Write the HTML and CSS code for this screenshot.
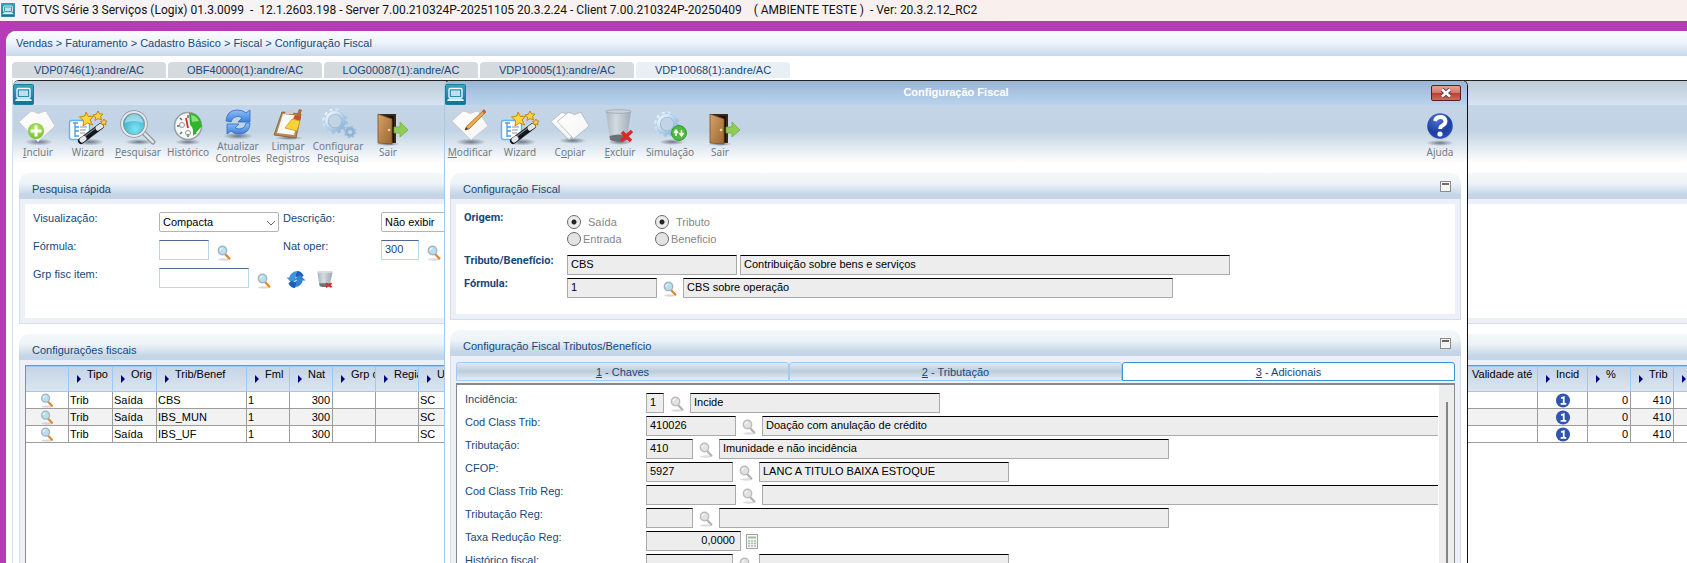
FILE: index.html
```html
<!DOCTYPE html>
<html lang="pt-BR">
<head>
<meta charset="utf-8">
<title>TOTVS Série 3 Serviços (Logix)</title>
<link rel="stylesheet" href="styles.css">
</head>
<body>
<svg class="sprite" aria-hidden="true">
  <defs>
    <linearGradient id="gTeal" x1="0" y1="0" x2="0" y2="1"><stop offset="0" stop-color="#3aa5bd"/><stop offset="1" stop-color="#0f7192"/></linearGradient>
    <linearGradient id="gPage" x1="0" y1="0" x2="1" y2="1"><stop offset="0" stop-color="#fff"/><stop offset="1" stop-color="#f4f4f6"/></linearGradient>
    <radialGradient id="gGreen" cx=".5" cy=".35" r=".7"><stop offset="0" stop-color="#b6ec62"/><stop offset="1" stop-color="#6fbe2c"/></radialGradient>
    <radialGradient id="gLens" cx=".55" cy=".7" r=".7"><stop offset="0" stop-color="#7fe6f5"/><stop offset="1" stop-color="#2b9dbd"/></radialGradient>
    <radialGradient id="gShadow"><stop offset="0" stop-color="#4a5563" stop-opacity=".75"/><stop offset="1" stop-color="#4a5563" stop-opacity="0"/></radialGradient>
    <linearGradient id="gBlue" x1="0" y1="0" x2="0" y2="1"><stop offset="0" stop-color="#8fc0f5"/><stop offset="1" stop-color="#3c7fdc"/></linearGradient>
    <linearGradient id="gGear" x1="0" y1="0" x2="1" y2="1"><stop offset="0" stop-color="#f0fafe"/><stop offset="1" stop-color="#86b2da"/></linearGradient>
    <linearGradient id="gDoor" x1="0" y1="0" x2="1" y2="1"><stop offset="0" stop-color="#d6a468"/><stop offset="1" stop-color="#9a6430"/></linearGradient>
    <linearGradient id="gGlass" x1="0" y1="0" x2="1" y2="0"><stop offset="0" stop-color="#a9b3ba"/><stop offset=".4" stop-color="#d5dce1"/><stop offset="1" stop-color="#9aa5ad"/></linearGradient>
    <radialGradient id="gHelp" cx=".4" cy=".25" r=".85"><stop offset="0" stop-color="#4d74d2"/><stop offset=".6" stop-color="#1d3f9f"/><stop offset="1" stop-color="#3158c4"/></radialGradient>
  </defs>
  <symbol id="i-app" viewBox="0 0 21 21">
    <rect x=".5" y=".5" width="20" height="20" rx="1" fill="url(#gTeal)" stroke="#1a7f9e"/>
    <rect x="4" y="4.500" width="13" height="9.500" rx="1" fill="#2a8fae" stroke="#fff" stroke-width="1.300"/>
    <rect x="6" y="6.500" width="9" height="5.500" fill="#bfe0ea"/>
    <path d="M3 15h15l1 2H2z" fill="#d9eef5"/>
  </symbol>
  <symbol id="i-add" viewBox="0 0 40 38">
    <ellipse cx="21" cy="34" rx="14" ry="3.500" fill="url(#gShadow)"/>
    <path d="M1 14 13 3l4 1q3 3 7 0l4-1 9 15-17 16z" fill="url(#gPage)" stroke="#c3c6cc" stroke-width=".8"/>
    <circle cx="18" cy="23" r="8" fill="url(#gGreen)"/>
    <path d="M18 17.500v11M12.500 23h11" stroke="#fff" stroke-width="3"/>
  </symbol>
  <symbol id="i-edit" viewBox="0 0 40 38">
    <ellipse cx="21" cy="34" rx="15" ry="3.500" fill="url(#gShadow)"/>
    <path d="M2 13 13 3l4 1q3 3 7 0l4-1 10 15-17 14z" fill="url(#gPage)" stroke="#c3c6cc" stroke-width=".8"/>
    <path d="m15 22 2-4L34 2l2 2-17 17z" fill="#f0ab4c" stroke="#a96420" stroke-width=".8"/>
    <path d="m34 1 2 3-2 2-2-3z" fill="#c9604c"/><path d="m15 22 1-3 2 2z" fill="#333"/>
  </symbol>
  <symbol id="i-copy" viewBox="0 0 44 38">
    <ellipse cx="25" cy="34" rx="15" ry="3.500" fill="url(#gShadow)"/>
    <path d="M1 13 13 3l4 1 7 0 8 14-11 15z" fill="url(#gPage)" stroke="#a9aeb6" stroke-width=".8"/>
    <path d="M8 13 20 3l4 1q3 3 6 0l4-1 9 15-17 14z" fill="url(#gPage)" stroke="#a9aeb6" stroke-width=".8"/>
  </symbol>
  <symbol id="i-wizard" viewBox="0 0 40 38">
    <ellipse cx="22" cy="34" rx="14" ry="3.500" fill="url(#gShadow)"/>
    <rect x="1.500" y="12.500" width="20" height="19" rx="2" fill="#fff" stroke="#65b3f0" stroke-width="1.500"/>
    <path d="M5 15h5M7 15v14M7 19h4M7 23h4M7 28h4" stroke="#4b9ce0" stroke-width="1.300" fill="none"/>
    <path d="M13 33 33 18" stroke="#15171a" stroke-width="6" stroke-linecap="round"/>
    <path d="m14 32 2-1.500M30 20l3-2" stroke="#e3e6e8" stroke-width="5" stroke-linecap="round"/>
    <path d="m17 28 10-7.500" stroke="#7d8388" stroke-width="1.200"/>
    <path d="M12 19h7M12 22h6M12 25h5" stroke="#8d949c" stroke-width="1.200"/>
    <g fill="#ffd43d" stroke="#c48a0c" stroke-width="1">
      <path d="m18 4 2.500 4.500 5-.5-3.300 4 2.300 5-5-2-4.500 3 .5-5.500-4-3.500 5.200-1z"/>
      <path d="m30 3 1.500 3 3.500 0-2.500 2.500 1 3.500-3.500-1.500-3 2 .5-3.500-2.500-2 3.300-.7z"/>
      <path d="m36 11 1 2h2l-1.500 2 .5 2-2-1-2 1v-2l-1.500-1.500 2.200-.5z"/>
    </g>
  </symbol>
  <symbol id="i-search" viewBox="0 0 40 38">
    <ellipse cx="21" cy="34" rx="14" ry="3" fill="url(#gShadow)"/>
    <path d="m25 24 10 10" stroke="#8a949c" stroke-width="5" stroke-linecap="round"/>
    <path d="m25 24 10 10" stroke="#dfe4e7" stroke-width="2.500" stroke-linecap="round"/>
    <circle cx="16" cy="16" r="12" fill="url(#gLens)" stroke="#8c979f" stroke-width="3.500"/>
    <circle cx="16" cy="16" r="12" fill="none" stroke="#e3e8eb" stroke-width="2"/>
    <path d="M7 15a9 9 0 0 1 18 0q-9-4-18 0" fill="#fff" opacity=".45"/>
  </symbol>
  <symbol id="i-history" viewBox="0 0 40 38">
    <ellipse cx="20" cy="34" rx="13" ry="3" fill="url(#gShadow)"/>
    <circle cx="20" cy="18" r="13.500" fill="#f6f7f7" stroke="#9aa0a5" stroke-width="1.600"/>
    <path d="M20 7v3M9 18h3M20 29v-3M12 10l2 2M12 26l2-2M28 26l-2-2" stroke="#6a7075" stroke-width="1.600"/>
    <circle cx="14" cy="17" r="2.500" fill="none" stroke="#999"/><circle cx="20" cy="25" r="2.500" fill="none" stroke="#999"/>
    <path d="M18 10l2 10" stroke="#d0312a" stroke-width="1.800"/>
    <path d="M21 5q8 0 11 6l2 7-9 10v-6q0-3-3-5z" fill="#2fb52a"/><path d="M23 7q6 1 8 6l-7 1z" fill="#8be07a"/>
  </symbol>
  <symbol id="i-refresh" viewBox="0 0 40 32">
    <ellipse cx="20" cy="28" rx="15" ry="3.500" fill="url(#gShadow)"/>
    <g fill="url(#gBlue)" stroke="#2f6ac2" stroke-width=".8">
      <path d="M8 13Q9 2 19 2q6 0 9 3l4-3v12H20l4-4q-3-3-7-1-3 1-4 5z"/>
      <path d="M32 15q0 10-10 11-6 0-9-3l-4 3V16h12l-4 4q4 2 8 0 2-1 3-5z"/>
    </g>
  </symbol>
  <symbol id="i-clear" viewBox="0 0 40 32">
    <ellipse cx="21" cy="30" rx="14" ry="2" fill="url(#gShadow)"/>
    <path d="m14 4 19 2-5 24-22-3z" fill="#b98a54" stroke="#7f552b" stroke-width=".8"/>
    <path d="m15 6 16 2-5 19-17-2z" fill="#fafafa"/><path d="M18 2h8l-1 4h-8z" fill="#c9ccd0"/>
    <path d="m31 1 3 1-3 8-3-1z" fill="#b8683a"/><path d="m27 7 6 2-1 4-7-2z" fill="#cf4a36"/>
    <path d="m24 11 8 2-3 10-12-3z" fill="#f8d434" stroke="#c99c10" stroke-width=".8"/>
  </symbol>
  <symbol id="i-gears" viewBox="0 0 40 32">
    <circle cx="17" cy="13" r="11" fill="none" stroke="url(#gGear)" stroke-width="3.500" stroke-dasharray="3.200 2.560"/>
    <circle cx="17" cy="13" r="8.500" fill="none" stroke="#8fb3d2" stroke-width="4"/>
    <circle cx="17" cy="13" r="8.700" fill="none" stroke="url(#gGear)" stroke-width="3.200"/>
    <circle cx="32" cy="24" r="3.500" fill="none" stroke="#8fb3d2" stroke-width="2.800"/>
    <circle cx="32" cy="24" r="5.300" fill="none" stroke="#9cbedd" stroke-width="2" stroke-dasharray="2.200 1.960"/>
  </symbol>
  <symbol id="i-sim" viewBox="0 0 40 38">
    <ellipse cx="22" cy="34" rx="13" ry="3" fill="url(#gShadow)"/>
    <circle cx="17" cy="16" r="11" fill="none" stroke="url(#gGear)" stroke-width="3.500" stroke-dasharray="3.200 2.560"/>
    <circle cx="17" cy="16" r="8.500" fill="none" stroke="#8fb3d2" stroke-width="4"/>
    <circle cx="17" cy="16" r="8.700" fill="none" stroke="url(#gGear)" stroke-width="3.200"/>
    <circle cx="29" cy="25" r="7.500" fill="#4fbb3c" stroke="#2a8a22" stroke-width=".8"/>
    <path d="M26 28v-5m-2 2 2-3 2 3M31.500 22v5m-2-2 2 3 2-3" fill="none" stroke="#fff" stroke-width="1.500"/>
  </symbol>
  <symbol id="i-exit" viewBox="0 0 40 38">
    <ellipse cx="20" cy="36" rx="12" ry="2" fill="url(#gShadow)"/>
    <path d="M10 6h18v29H10z" fill="#3b2817"/><path d="M14 8h12v26H14z" fill="#16130f"/>
    <path d="m10 6 14 5v25l-14-1z" fill="url(#gDoor)" stroke="#7c4f23" stroke-width=".8"/>
    <circle cx="21" cy="22" r="1.300" fill="#f3dc9a"/>
    <path d="M26 19h6v-5l8 8-8 7v-4h-6z" fill="#8fcb55" stroke="#6fae38" stroke-width=".7"/>
  </symbol>
  <symbol id="i-trash" viewBox="0 0 40 38">
    <ellipse cx="20" cy="34" rx="12" ry="3" fill="url(#gShadow)"/>
    <path d="m6 3 4 29q9 4 17 0l4-29z" fill="url(#gGlass)" opacity=".85"/>
    <path d="m9.500 28 .6 4q9 4 17 0l.6-4q-9-3-18.200 0" fill="#6a7278"/>
    <ellipse cx="18.500" cy="3.500" rx="12.800" ry="1.800" fill="#ccd3d8" stroke="#9aa4ab" stroke-width=".8"/>
    <path d="m22 24 9 9m1-10L21 33" stroke="#d62a24" stroke-width="3.500"/>
  </symbol>
  <symbol id="i-help" viewBox="0 0 40 38">
    <ellipse cx="20" cy="35" rx="14" ry="3" fill="url(#gShadow)"/>
    <circle cx="20" cy="18" r="13.500" fill="url(#gHelp)" stroke="#c7d3ea" stroke-width="1.500"/>
    <path d="M15 13q1-4 5.500-4t5 4q0 3-3 4.500-2.300 1-2.300 3.500" fill="none" stroke="#fff" stroke-width="3.800"/>
    <circle cx="20" cy="26" r="2.600" fill="#fff"/>
  </symbol>
  <symbol id="i-lens" viewBox="0 0 14 16">
    <ellipse cx="7" cy="14.500" rx="6" ry="1.200" fill="#b9c0c6" opacity=".6"/>
    <path d="m8.500 9.500 3.800 4" stroke="#e08a2c" stroke-width="2.400" stroke-linecap="round"/>
    <circle cx="5.500" cy="5.500" r="4.200" fill="#b5e0f2" stroke="#a7b3bd" stroke-width="1.400"/>
    <path d="M3 5.500q0-2.500 2.500-2.500" stroke="#fff" fill="none"/>
  </symbol>
  <symbol id="i-lens-off" viewBox="0 0 14 16">
    <ellipse cx="7" cy="14.500" rx="6" ry="1.200" fill="#c4c4c4" opacity=".6"/>
    <path d="m8.500 9.500 3.800 4" stroke="#b4b4b4" stroke-width="2.400" stroke-linecap="round"/>
    <circle cx="5.500" cy="5.500" r="4.200" fill="#e2e2e2" stroke="#bcbcbc" stroke-width="1.400"/>
    <path d="M3 5.500q0-2.500 2.500-2.500" stroke="#fff" fill="none"/>
  </symbol>
  <symbol id="i-sync" viewBox="0 0 20 20">
    <path d="M0 8h3q1-6 8-7l-1 3 1 3q-2 0-2 2h3l-6 5z" fill="#3f94e0"/>
    <path d="M11 1q5 0 7 5l-4 3q-1-2-4-2l0-3z" fill="#1c5fb4"/>
    <path d="M20 11h-3q-1 6-8 7l1-3-1-3q2 0 2-2H8l6-5z" fill="#2f82d6"/>
    <path d="M9 19q-5 0-7-5l4-3q1 2 4 2v3z" fill="#1c5fb4"/>
  </symbol>
  <symbol id="i-bin" viewBox="0 0 18 20">
    <path d="m1 2 2 14q6 3 11 0l3-14z" fill="url(#gGlass)"/>
    <path d="m3 14 .5 3q5 2 11 0l.5-3z" fill="#6a7278"/>
    <path d="M1 1h16v2H1z" fill="#d9dee2"/><path d="m10 14 6 4m0-4-6 4" stroke="#d2322c" stroke-width="2"/>
  </symbol>
  <symbol id="i-calc" viewBox="0 0 12 15">
    <rect x=".5" y=".5" width="11" height="14" fill="#f6f8f5" stroke="#9aa69a"/>
    <path d="M2 2.500h8v2H2z" fill="#a3c0a3"/>
    <path d="M2 7h2M5 7h2M8 7h2M2 9.500h2M5 9.500h2M8 9.500h2M2 12h2M5 12h2M8 12h2" stroke="#a6b6a6" stroke-width="1.300"/>
  </symbol>
  <symbol id="i-min" viewBox="0 0 11 11">
    <rect x=".5" y=".5" width="10" height="10" fill="#f4f4f4" stroke="#8c8c8c"/><path d="M2 3h7" stroke="#444" stroke-width="1.600"/>
  </symbol>
  <symbol id="i-one" viewBox="0 0 16 16">
    <circle cx="8" cy="8" r="7.500" fill="#2f55b0"/><path d="M5.500 11.500h6M8.800 11.500V4.500l-2.800 1" stroke="#fff" stroke-width="1.900" fill="none"/>
  </symbol>
  <symbol id="i-close" viewBox="0 0 12 10"><path d="m2 1.500 8 7m0-7-8 7" stroke="#5a3b3b" stroke-width="4.400"/><path d="m2 1.500 8 7m0-7-8 7" stroke="#fff" stroke-width="2.600"/></symbol>
  <symbol id="i-chev" viewBox="0 0 10 6"><path d="m1 1 4 4 4-4" fill="none" stroke="#666"/></symbol>
</svg>

<div class="app">
  <header class="titlebar">
    <svg class="titlebar-icon"><use href="#i-app"/></svg>
    <span class="caption">TOTVS Série 3 Serviços (Logix) 01.3.0099&nbsp; -&nbsp; 12.1.2603.198 - Server 7.00.210324P-20251105 20.3.2.24 - Client 7.00.210324P-20250409 &nbsp;&nbsp; ( AMBIENTE TESTE )&nbsp; - Ver: 20.3.2.12_RC2</span>
  </header>

  <div class="desktop">
    <nav class="breadcrumb">Vendas &gt; Faturamento &gt; Cadastro Básico &gt; Fiscal &gt; Configuração Fiscal</nav>
    <div class="session-tabs">
      <button class="session">VDP0746(1):andre/AC</button>
      <button class="session">OBF40000(1):andre/AC</button>
      <button class="session">LOG00087(1):andre/AC</button>
      <button class="session">VDP10005(1):andre/AC</button>
      <button class="session current">VDP10068(1):andre/AC</button>
    </div>

    <main class="canvas">
      <section class="window">
        <div class="window-title inactive"><svg class="window-icon"><use href="#i-app"/></svg></div>
        <div class="toolbar">
          <button class="tool"><svg><use href="#i-add"/></svg><span><u>I</u>ncluir</span></button>
          <button class="tool"><svg><use href="#i-wizard"/></svg><span>Wizard</span></button>
          <button class="tool"><svg><use href="#i-search"/></svg><span><u>P</u>esquisar</span></button>
          <button class="tool"><svg><use href="#i-history"/></svg><span>Histórico</span></button>
          <button class="tool two-line"><svg><use href="#i-refresh"/></svg><span>Atualizar<br>Controles</span></button>
          <button class="tool two-line"><svg><use href="#i-clear"/></svg><span>Limpar<br>Registros</span></button>
          <button class="tool two-line"><svg><use href="#i-gears"/></svg><span>Configurar<br>Pesquisa</span></button>
          <button class="tool"><svg><use href="#i-exit"/></svg><span>Sair</span></button>
        </div>

        <section class="panel">
          <h2 class="panel-head">Pesquisa rápida</h2>
          <div class="panel-body">
            <form class="form search-form">
              <div class="line">
                <label class="lead" for="vis">Visualização:</label>
                <span class="slot"><span class="select"><select id="vis"><option>Compacta</option></select><svg><use href="#i-chev"/></svg></span></span>
                <label class="mid" for="desc">Descrição:</label>
                <span class="select"><select id="desc"><option>Não exibir</option></select><svg><use href="#i-chev"/></svg></span>
              </div>
              <div class="line">
                <label class="lead" for="fml">Fórmula:</label>
                <span class="slot"><input class="field w50" id="fml"><button type="button" class="lookup wide" aria-label="Buscar fórmula"><svg><use href="#i-lens"/></svg></button></span>
                <label class="mid" for="nat">Nat oper:</label>
                <input class="field w38" id="nat" value="300"><button type="button" class="lookup wide" aria-label="Buscar natureza"><svg><use href="#i-lens"/></svg></button>
              </div>
              <div class="line">
                <label class="lead" for="grp">Grp fisc item:</label>
                <input class="field w90" id="grp"><button type="button" class="lookup wide" aria-label="Buscar grupo"><svg><use href="#i-lens"/></svg></button>
                <button type="button" class="mini" aria-label="Atualizar"><svg><use href="#i-sync"/></svg></button>
                <button type="button" class="mini" aria-label="Limpar"><svg><use href="#i-bin"/></svg></button>
              </div>
            </form>
          </div>
        </section>

        <section class="panel grow">
          <h2 class="panel-head">Configurações fiscais</h2>
          <div class="panel-body">
            <div class="grid-box">
              <table class="grid">
                <colgroup>
                  <col class="c43"><col class="c44"><col class="c44"><col class="c90"><col class="c43"><col class="c43"><col class="c43"><col class="c43"><col class="c43"><col><col class="c84"><col class="c50"><col class="c43"><col class="c43"><col class="c43">
                </colgroup>
                <thead><tr><th class="plain"></th><th>Tipo</th><th>Orig</th><th>Trib/Benef</th><th>Fml</th><th>Nat</th><th>Grp cli</th><th>Região</th><th>UF</th><th></th><th>Validade até</th><th>Incid</th><th>%</th><th>Trib</th><th></th></tr></thead>
                <tbody>
                  <tr><td class="icon"><svg class="lens"><use href="#i-lens"/></svg></td><td>Trib</td><td>Saída</td><td>CBS</td><td>1</td><td class="num">300</td><td></td><td></td><td>SC</td><td></td><td></td><td class="icon"><svg class="one"><use href="#i-one"/></svg></td><td class="num">0</td><td class="num">410</td><td></td></tr>
                  <tr><td class="icon"><svg class="lens"><use href="#i-lens"/></svg></td><td>Trib</td><td>Saída</td><td>IBS_MUN</td><td>1</td><td class="num">300</td><td></td><td></td><td>SC</td><td></td><td></td><td class="icon"><svg class="one"><use href="#i-one"/></svg></td><td class="num">0</td><td class="num">410</td><td></td></tr>
                  <tr><td class="icon"><svg class="lens"><use href="#i-lens"/></svg></td><td>Trib</td><td>Saída</td><td>IBS_UF</td><td>1</td><td class="num">300</td><td></td><td></td><td>SC</td><td></td><td></td><td class="icon"><svg class="one"><use href="#i-one"/></svg></td><td class="num">0</td><td class="num">410</td><td></td></tr>
                </tbody>
              </table>
            </div>
          </div>
        </section>
      </section>

      <section class="window dialog" role="dialog" aria-labelledby="dlg-title">
        <div class="window-title">
          <svg class="window-icon"><use href="#i-app"/></svg>
          <h1 id="dlg-title">Configuração Fiscal</h1>
          <button class="close" aria-label="Fechar"><svg><use href="#i-close"/></svg></button>
        </div>
        <div class="toolbar">
          <button class="tool"><svg><use href="#i-edit"/></svg><span><u>M</u>odificar</span></button>
          <button class="tool"><svg><use href="#i-wizard"/></svg><span>Wizard</span></button>
          <button class="tool"><svg><use href="#i-copy"/></svg><span>C<u>o</u>piar</span></button>
          <button class="tool"><svg><use href="#i-trash"/></svg><span><u>E</u>xcluir</span></button>
          <button class="tool"><svg><use href="#i-sim"/></svg><span>Simulação</span></button>
          <button class="tool"><svg><use href="#i-exit"/></svg><span>Sair</span></button>
          <button class="tool help"><svg><use href="#i-help"/></svg><span>Ajuda</span></button>
        </div>

        <section class="panel">
          <div class="panel-head"><h2>Configuração Fiscal</h2><button class="collapse" aria-label="Recolher"><svg><use href="#i-min"/></svg></button></div>
          <div class="panel-body">
            <form class="form key-form">
              <div class="line origin">
                <span class="lead">Origem:</span>
                <div class="radios">
                  <label class="spaced"><input type="radio" name="origem" checked disabled>Saída</label>
                  <label class="spaced"><input type="radio" name="tipo" checked disabled>Tributo</label>
                  <label><input type="radio" name="origem" disabled>Entrada</label>
                  <label><input type="radio" name="tipo" disabled>Beneficio</label>
                </div>
              </div>
              <div class="line">
                <label class="lead" for="trib">Tributo/Benefício:</label>
                <input class="field ro w170" id="trib" value="CBS" readonly><input class="field ro w490 near" aria-label="Descrição do tributo" value="Contribuição sobre bens e serviços" readonly>
              </div>
              <div class="line">
                <label class="lead" for="form">Fórmula:</label>
                <input class="field ro w90" id="form" value="1" readonly><button type="button" class="lookup" aria-label="Buscar"><svg><use href="#i-lens"/></svg></button><input class="field ro w490" aria-label="Descrição da fórmula" value="CBS sobre operação" readonly>
              </div>
            </form>
          </div>
        </section>

        <section class="panel grow">
          <div class="panel-head"><h2>Configuração Fiscal Tributos/Benefício</h2><button class="collapse" aria-label="Recolher"><svg><use href="#i-min"/></svg></button></div>
          <div class="panel-body tabbed">
            <div class="tabs" role="tablist">
              <button role="tab"><span><u>1</u> - Chaves</span></button>
              <button role="tab"><span><u>2</u> - Tributação</span></button>
              <button role="tab" class="selected" aria-selected="true"><span><u>3</u> - Adicionais</span></button>
            </div>
            <div class="tab-page">
              <form class="form detail-form">
                <div class="line"><label class="lead" for="f1">Incidência:</label><input class="field ro w18" id="f1" value="1" readonly><button type="button" class="lookup" disabled aria-label="Buscar"><svg><use href="#i-lens-off"/></svg></button><input class="field ro w250" aria-label="Incidência" value="Incide" readonly></div>
                <div class="line"><label class="lead" for="f2">Cod Class Trib:</label><input class="field ro w90" id="f2" value="410026" readonly><button type="button" class="lookup" disabled aria-label="Buscar"><svg><use href="#i-lens-off"/></svg></button><input class="field ro rest" aria-label="Classificação" value="Doação com anulação de crédito" readonly></div>
                <div class="line"><label class="lead" for="f3">Tributação:</label><input class="field ro w47" id="f3" value="410" readonly><button type="button" class="lookup" disabled aria-label="Buscar"><svg><use href="#i-lens-off"/></svg></button><input class="field ro w450" aria-label="Tributação" value="Imunidade e não incidência" readonly></div>
                <div class="line"><label class="lead" for="f4">CFOP:</label><input class="field ro w87" id="f4" value="5927" readonly><button type="button" class="lookup" disabled aria-label="Buscar"><svg><use href="#i-lens-off"/></svg></button><input class="field ro w250" aria-label="CFOP" value="LANC A TITULO BAIXA ESTOQUE" readonly></div>
                <div class="line"><label class="lead" for="f5">Cod Class Trib Reg:</label><input class="field ro w90" id="f5" readonly><button type="button" class="lookup" disabled aria-label="Buscar"><svg><use href="#i-lens-off"/></svg></button><input class="field ro rest" aria-label="Classificação regular" readonly></div>
                <div class="line"><label class="lead" for="f6">Tributação Reg:</label><input class="field ro w47" id="f6" readonly><button type="button" class="lookup" disabled aria-label="Buscar"><svg><use href="#i-lens-off"/></svg></button><input class="field ro w450" aria-label="Tributação regular" readonly></div>
                <div class="line"><label class="lead" for="f7">Taxa Redução Reg:</label><input class="field ro w95 right" id="f7" value="0,0000" readonly><button type="button" class="calc" disabled aria-label="Calculadora"><svg><use href="#i-calc"/></svg></button></div>
                <div class="line"><label class="lead" for="f8">Histórico fiscal:</label><input class="field ro w87" id="f8" readonly><button type="button" class="lookup" disabled aria-label="Buscar"><svg><use href="#i-lens-off"/></svg></button><input class="field ro w250" aria-label="Histórico fiscal" readonly></div>
              </form>
              <div class="scroll"><div class="thumb"></div></div>
            </div>
          </div>
        </section>
      </section>
    </main>
  </div>
</div>
</body>
</html>
```
FILE: styles.css
```css
* { box-sizing: border-box; }
html, body { margin: 0; height: 100%; }
body {
  font: 11px/12px "Liberation Sans", Arial, sans-serif;
  color: #17487a;
  background: #b73bb7;
  overflow: hidden;
}
button { font: inherit; color: inherit; padding: 0; margin: 0; border: 0; background: none; }
input, select { font: inherit; margin: 0; }
h1, h2 { margin: 0; font: inherit; }
svg { display: block; flex: none; }
.sprite { position: absolute; width: 0; height: 0; }

.app { height: 100vh; display: flex; flex-direction: column; overflow: hidden; }
.titlebar {
  flex: none; height: 21px; display: flex; align-items: center; gap: 7px; padding: 0 1px 2px;
  background: linear-gradient(90deg, #f6f3f6, #f9efed 60%);
  color: #111; font: 12px/16px Roboto, "Noto Sans", sans-serif; white-space: nowrap;
}
.titlebar-icon { width: 14px; height: 14px; }

.desktop {
  flex: 1; min-height: 0; margin: 10px 0 0 6px; display: flex; flex-direction: column;
  background: #fff; border-top-left-radius: 10px; overflow: hidden;
}
.breadcrumb {
  flex: none; height: 25px; padding-left: 10px; line-height: 25px; font-size: 11px;
  background: linear-gradient(#fafcff, #eef4fb 45%, #c6d8ec);
}
.session-tabs { flex: none; display: flex; gap: 2px; padding: 6px 0 0 6px; height: 24px; }
.session {
  width: 154px; height: 16px; border-radius: 4px 4px 0 0; background: #d5dadf; line-height: 16px;
}
.session.current { background: #e8eff5; }

.canvas { flex: 1; min-height: 0; position: relative; border-left: 1px solid #d5e3ee; margin-left: 6px; display: flex; }
.window {
  flex: 1; min-width: 0; display: flex; flex-direction: column;
  background: #fff; border-top: 1px solid #222; border-top-left-radius: 6px; overflow: hidden;
}
.dialog {
  position: absolute; top: 0; bottom: 0; left: 431px; right: 219px;
  border-left: 1px solid #a9c9e6; border-right: 1px solid #111; border-top-right-radius: 6px;
}
.window-title {
  flex: none; height: 24px; display: flex; align-items: center; justify-content: space-between;
  background: linear-gradient(#9ab5d3, #a9c4e1 45%, #b9d3ed);
  color: #fff; font-weight: bold;
}
.window-title.inactive { background: linear-gradient(#bdcbda, #d7e5f2); }
.window-title h1 { font-size: 11px; padding: 0 0 2px 15px; }
.window-icon { width: 21px; height: 21px; align-self: flex-end; }
.close {
  width: 30px; height: 16px; margin-right: 6px; border: 1px solid #5a1c20; border-radius: 2px;
  background: linear-gradient(#e7a294, #d4776a 48%, #b93f33 52%, #d4685a);
  display: flex; align-items: center; justify-content: center;
}
.close svg { width: 12px; height: 10px; }

.toolbar {
  flex: none; height: 68px; padding-top: 3px; display: flex;
  background: linear-gradient(#c3d5e6, #c1d3e4 38%, #fff 85%);
}
.tool {
  width: 50px; flex: none; display: flex; flex-direction: column; align-items: center;
  justify-content: flex-start; white-space: nowrap;
  color: #737b83; font: 10px/12px "Noto Sans", sans-serif;
}
.tool svg { width: 40px; height: 38px; }
.tool.two-line svg { height: 32px; }
.tool.help { margin: 0 2px 0 auto; }

.panel { flex: none; margin: 0 6px 10px; display: flex; flex-direction: column; }
.window:not(.dialog) > .panel { margin-right: -16px; }
.dialog > .panel { margin-left: 5px; }
.panel.grow, .window:not(.dialog) > .panel.grow { flex: 1; min-height: 0; margin-bottom: 0; }
.panel-head {
  flex: none; height: 26px; padding: 5px 10px 0 13px; display: flex; align-items: center;
  justify-content: space-between; border-radius: 10px 10px 0 0; font-size: 11px;
  background: linear-gradient(#f4f8fa, #edf3f7 40%, #c3d5e6 85%);
}
.collapse svg { width: 11px; height: 11px; margin-bottom: 5px; }
.panel-body {
  flex: 1; min-height: 0; display: flex; flex-direction: column; padding: 5px;
  background: #edf1f7; border: solid #d3e0eb; border-width: 0 1px 1px;
}
.grow > .panel-body { padding-bottom: 0; border-bottom: 0; }

.form { flex: 1; min-width: 0; background: #fff; padding: 8px 0 0 8px; display: flex; flex-direction: column; }
.line { display: flex; align-items: flex-start; flex: none; }
.lead, .mid { flex: none; white-space: nowrap; }
.search-form { gap: 8px; padding-bottom: 30px; }
.search-form .line { height: 20px; }
.search-form .lead { width: 126px; }
.search-form .mid { width: 98px; }
.slot { width: 124px; flex: none; display: flex; }
.key-form { gap: 3px; padding-bottom: 16px; }
.key-form .lead { width: 103px; font: bold 11px/12px Roboto, "Noto Sans", sans-serif; }
.detail-form { gap: 3px; }
.detail-form .lead { width: 181px; }

.field {
  flex: none; height: 20px; padding: 0 3px 2px; color: #17487a; background: #fff; outline: 0;
  border: 1px solid #b7d7ef; border-top-color: #54698f; border-radius: 0;
}
.field.ro { background: #ededed; color: #000; border-color: #000 #aaa #aaa; }
.field.near { margin-left: 3px; }
.field.right { text-align: right; padding-right: 5px; }
.field.rest { flex: 1; min-width: 0; border-right: 0; margin-right: 1px; }
.w18 { width: 18px; } .w38 { width: 38px; } .w47 { width: 47px; } .w50 { width: 50px; }
.w87 { width: 87px; } .w90 { width: 90px; } .w95 { width: 95px; } .w170 { width: 170px; }
.w250 { width: 250px; } .w450 { width: 450px; } .w490 { width: 490px; }

.select { position: relative; flex: none; width: 120px; }
.select select {
  appearance: none; display: block; width: 100%; height: 20px; padding: 0 3px; color: #000;
  background: #fff; border: 1px solid #b4b4b4; border-radius: 2px;
}
.select svg { position: absolute; right: 3px; top: 8px; width: 10px; height: 6px; }
.lookup { width: 26px; flex: none; padding: 3px 6px 0; }
.lookup.wide { width: 30px; padding: 5px 8px 0; }
.lookup svg { width: 14px; height: 16px; }
.mini { width: 20px; margin: 2px 2px 0 7px; flex: none; }
.mini svg { width: 20px; height: 19px; }
.calc { padding: 3px 5px 0; }
.calc svg { width: 12px; height: 15px; }

.origin { height: 40px; }
.radios { display: grid; grid-template-columns: 88px auto; gap: 3px 0; padding-top: 3px; color: #868686; }
.radios label { display: flex; align-items: center; height: 14px; gap: 2px; }
.radios label.spaced { gap: 7px; }
.radios input {
  appearance: none; width: 14px; height: 14px; border: 1px solid #6a6a6a; border-radius: 50%;
  background: #e4e4e4;
}
.radios input:checked { background: radial-gradient(circle, #222 0 2px, #ededed 3px); }

.grid-box { flex: 1; min-height: 0; background: #fff; border: solid #8e8e8e; border-width: 1px 0 0 1px; overflow: hidden; }
.grid { table-layout: fixed; border-collapse: separate; border-spacing: 0; width: calc(100% + 20px); color: #000; }
.c43 { width: 43px; } .c44 { width: 44px; } .c50 { width: 50px; } .c84 { width: 84px; } .c90 { width: 90px; }
.grid th {
  height: 26px; padding: 1px 0 0 18px; text-align: left; vertical-align: top; font-weight: normal; line-height: 12px;
  position: relative; overflow: hidden; white-space: nowrap; background: linear-gradient(#c5d4e6, #dbe5f0);
  border: solid #99caf8; border-width: 1px 1px 1px 0;
}
.grid th:not(.plain)::before {
  content: ""; position: absolute; left: 8px; top: 8px;
  border: solid transparent; border-width: 4px 0 4px 4px; border-left-color: #000080;
}
.grid td {
  height: 17px; padding: 0 2px 1px 1px; line-height: 14px; overflow: hidden; white-space: nowrap;
  border: solid #9c9c9c; border-width: 0 1px 1px 0;
}
.grid tr:nth-child(even) td { background: #f2f2f2; }
.grid td.num { text-align: right; }
.grid td.icon { padding: 0; }
.grid td svg { margin: 0 auto; height: 15px; }
.lens { width: 14px; }
.one { width: 16px; }

.panel-body.tabbed { padding-top: 6px; }
.tabs { flex: none; display: flex; height: 19px; margin-bottom: 2px; }
.tabs button {
  flex: 1; height: 19px; border: 1px solid #9fcbf5; border-radius: 3px 3px 0 0;
  background: linear-gradient(#e0e9f1, #bccddd 50%, #e6edf6);
}
.tabs .selected { background: #fff; border-color: #3a93cf; }
.tab-page {
  flex: 1; min-height: 0; display: flex; background: #fff; overflow: hidden;
  border: solid #858a90; border-width: 2px 1px 0;
}
.scroll { width: 15px; flex: none; background: #ededed; padding-top: 17px; display: flex; justify-content: center; }
.thumb { width: 2px; background: #858585; }
```
